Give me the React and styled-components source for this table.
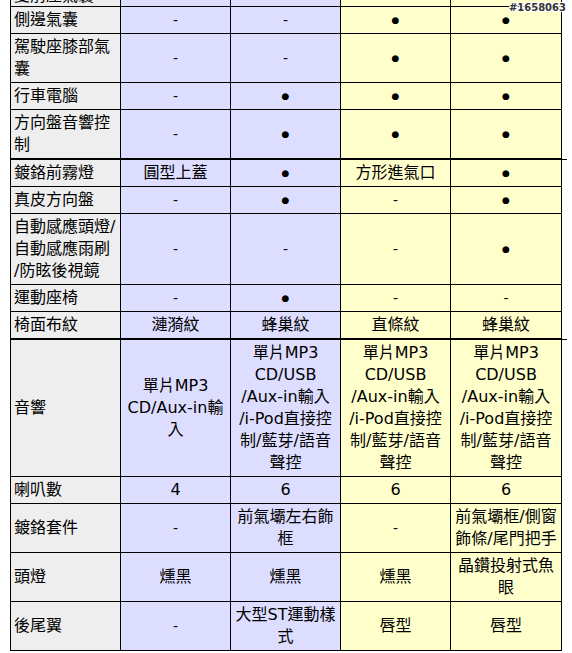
import React from "react";
import styled, { createGlobalStyle } from "styled-components";

const Global = createGlobalStyle`
  html, body { margin: 0; padding: 0; background: #ffffff; }
  body { font-family: "DejaVu Sans", "Noto Sans CJK TC", sans-serif; color: #000; }
`;

const Page = styled.div`
  position: relative;
  width: 572px;
  height: 653px;
  overflow: hidden;
  padding-left: 10px;
  box-sizing: border-box;
`;

const Section = styled.div`
  display: grid;
  grid-template-columns: 110px 110px 110px 110px 111px;
  width: 557px;
  box-sizing: border-box;
  border-left: 1px solid #000;
  border-top: ${(p) => (p.$noTop ? "none" : "1px solid #000")};
`;

const tones = {
  label: "#eeeeee",
  blue: "#ddddff",
  yellow: "#ffffcc",
};

const Cell = styled.div`
  background: ${(p) => tones[p.$tone]};
  border-right: 1px solid #000;
  border-bottom: 1px solid #000;
  padding: 2px 3px;
  font-size: 16px;
  line-height: 22px;
  display: flex;
  align-items: center;
  justify-content: ${(p) => (p.$tone === "label" ? "flex-start" : "center")};
  text-align: ${(p) => (p.$tone === "label" ? "left" : "center")};
  min-height: 22px;
`;

const CutCell = styled(Cell)`
  height: 6px;
  min-height: 0;
  padding: 0 3px;
  overflow: hidden;
  align-items: flex-start;
  box-sizing: content-box;
`;

const CutText = styled.span`
  line-height: 16px;
  margin-top: -12px;
`;

const Dot = styled.span`
  font-size: 9px;
  line-height: 22px;
`;

const Dash = styled.span`
  font-size: 14px;
`;

const Stamp = styled.div`
  position: absolute;
  top: 2px;
  right: 6px;
  font-family: "DejaVu Sans", sans-serif;
  font-weight: bold;
  font-size: 10px;
  line-height: 12px;
  color: #333;
  text-shadow: 1px 0 0 #fff, -1px 0 0 #fff, 0 1px 0 #fff, 0 -1px 0 #fff,
    1px 1px 0 #fff, -1px -1px 0 #fff, 1px -1px 0 #fff, -1px 1px 0 #fff;
`;

const tonesFor = ["blue", "blue", "yellow", "yellow"];

function Value({ v }) {
  if (v === "●") return <Dot>●</Dot>;
  if (v === "-") return <Dash>-</Dash>;
  if (Array.isArray(v))
    return (
      <span>
        {v.map((line, i) => (
          <React.Fragment key={i}>
            {i > 0 && <br />}
            {line}
          </React.Fragment>
        ))}
      </span>
    );
  return <span>{v}</span>;
}

function Row({ label, values }) {
  return (
    <>
      <Cell $tone="label">
        <Value v={label} />
      </Cell>
      {values.map((v, i) => (
        <Cell key={i} $tone={tonesFor[i]}>
          <Value v={v} />
        </Cell>
      ))}
    </>
  );
}

const audioFull = ["單片MP3", "CD/USB", "/Aux-in輸入", "/i-Pod直接控", "制/藍芽/語音", "聲控"];

const section1 = [
  { label: "側邊氣囊", values: ["-", "-", "●", "●"] },
  { label: ["駕駛座膝部氣", "囊"], values: ["-", "-", "●", "●"] },
  { label: "行車電腦", values: ["-", "●", "●", "●"] },
  { label: ["方向盤音響控", "制"], values: ["-", "●", "●", "●"] },
];

const section2 = [
  { label: "鍍鉻前霧燈", values: ["圓型上蓋", "●", "方形進氣口", "●"] },
  { label: "真皮方向盤", values: ["-", "●", "-", "●"] },
  {
    label: ["自動感應頭燈/", "自動感應雨刷", "/防眩後視鏡"],
    values: ["-", "-", "-", "●"],
  },
  { label: "運動座椅", values: ["-", "●", "-", "-"] },
  { label: "椅面布紋", values: ["漣漪紋", "蜂巢紋", "直條紋", "蜂巢紋"] },
];

const section3 = [
  {
    label: "音響",
    values: [["單片MP3", "CD/Aux-in輸", "入"], audioFull, audioFull, audioFull],
  },
  { label: "喇叭數", values: ["4", "6", "6", "6"] },
  {
    label: "鍍鉻套件",
    values: ["-", ["前氣壩左右飾", "框"], "-", ["前氣壩框/側窗", "飾條/尾門把手"]],
  },
  { label: "頭燈", values: ["燻黑", "燻黑", "燻黑", ["晶鑽投射式魚", "眼"]] },
  { label: "後尾翼", values: ["-", ["大型ST運動樣", "式"], "唇型", "唇型"] },
];

export default function App() {
  return (
    <>
      <Global />
      <Page>
        <Section $noTop>
          <CutCell $tone="label">
            <CutText>雙前座氣囊</CutText>
          </CutCell>
          <CutCell $tone="blue" />
          <CutCell $tone="blue" />
          <CutCell $tone="yellow" />
          <CutCell $tone="yellow" />
          {section1.map((r, i) => (
            <Row key={i} {...r} />
          ))}
        </Section>
        <Section>
          {section2.map((r, i) => (
            <Row key={i} {...r} />
          ))}
        </Section>
        <Section>
          {section3.map((r, i) => (
            <Row key={i} {...r} />
          ))}
        </Section>
        <Stamp>#1658063</Stamp>
      </Page>
    </>
  );
}
